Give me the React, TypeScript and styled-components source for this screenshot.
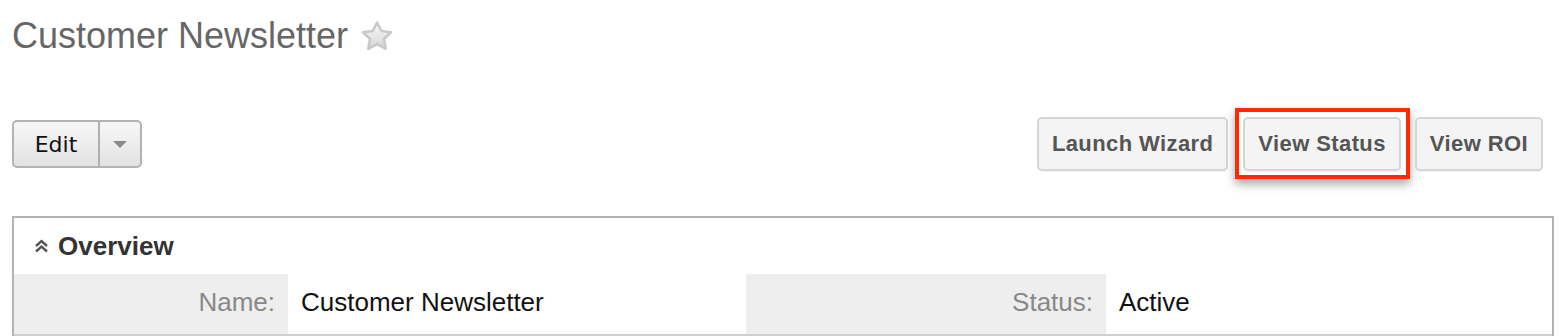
import styled, { createGlobalStyle } from "styled-components";

const GlobalStyle = createGlobalStyle`
  html, body {
    margin: 0;
    padding: 0;
    background: #fff;
  }
  body {
    font-family: "Liberation Sans", Arial, sans-serif;
  }
`;

const Page = styled.div`
  padding: 12px 6px 0 12px;
  width: 1560px;
  box-sizing: border-box;
`;

const TitleRow = styled.div`
  display: flex;
  align-items: center;
  gap: 12px;
  height: 48px;
`;

const Title = styled.h1`
  margin: 0;
  font-size: 36px;
  font-weight: normal;
  color: #666;
  line-height: 48px;
`;

const Toolbar = styled.div`
  display: flex;
  justify-content: space-between;
  align-items: center;
  margin-top: 57px;
  padding-right: 11px;
  height: 54px;
`;

const SplitButton = styled.div`
  display: flex;
  height: 48px;
  box-sizing: border-box;
  border: 2px solid #b3b3b3;
  border-radius: 5px;
  background: linear-gradient(#f7f7f7, #e2e2e2);
  overflow: hidden;
`;

const SplitMain = styled.button`
  width: 86px;
  border: none;
  border-right: 2px solid #b0b0b0;
  background: transparent;
  font-family: "DejaVu Sans", sans-serif;
  font-size: 22px;
  color: #111;
  padding: 0;
`;

const SplitCaret = styled.button`
  width: 40px;
  border: none;
  background: transparent;
  display: flex;
  align-items: center;
  justify-content: center;
  padding: 0;

  &::after {
    content: "";
    border-left: 7px solid transparent;
    border-right: 7px solid transparent;
    border-top: 7px solid #8a8a8a;
  }
`;

const Actions = styled.div`
  display: flex;
  gap: 15px;
  align-items: center;
`;

const ActionButton = styled.button`
  height: 54px;
  box-sizing: border-box;
  padding: 0 13px;
  border: 2px solid #d6d6d6;
  border-radius: 5px;
  background: #f4f4f4;
  box-shadow: 0 1px 1px rgba(0, 0, 0, 0.06);
  font-family: "Liberation Sans", Arial, sans-serif;
  font-weight: bold;
  font-size: 22px;
  letter-spacing: 0.4px;
  color: #555;
`;

const Highlight = styled.div`
  margin: -10px -10px -9px -8px;
  padding: 5px 5px 4px 4px;
  border: 4px solid #ff2a00;
  box-shadow: 0 5px 9px rgba(0, 0, 0, 0.35);
  display: flex;
`;

const Panel = styled.section`
  margin-top: 45px;
  border: 2px solid #b3b3b3;
  border-bottom: none;
`;

const PanelHeader = styled.div`
  height: 56px;
  display: flex;
  align-items: center;
  gap: 9px;
  padding-left: 20px;
  font-size: 26px;
  font-weight: bold;
  color: #333;
`;

const FieldRow = styled.div`
  display: grid;
  grid-template-columns: 274px 458px 360px 1fr;
  height: 60px;
  border-bottom: 2px solid #cfcfcf;
  font-size: 26px;
`;

const Label = styled.div`
  background: #eee;
  color: #888;
  display: flex;
  align-items: center;
  justify-content: flex-end;
  padding: 0 13px 3px 0;
`;

const Value = styled.div`
  color: #111;
  display: flex;
  align-items: center;
  padding: 0 0 3px 13px;
`;

const Star = () => (
  <svg width="34" height="32" viewBox="0 0 34 32">
    <defs>
      <linearGradient id="starFill" x1="0" y1="0" x2="0" y2="1">
        <stop offset="0" stopColor="#fbfbfb" />
        <stop offset="1" stopColor="#d4d4d4" />
      </linearGradient>
    </defs>
    <path
      d="M17 2.5 L21.3 11 L31 12.3 L24 19 L25.7 28.8 L17 24.2 L8.3 28.8 L10 19 L3 12.3 L12.7 11 Z"
      fill="url(#starFill)"
      stroke="#c9c9c9"
      strokeWidth="2.6"
      strokeLinejoin="round"
    />
  </svg>
);

const CollapseIcon = () => (
  <svg width="15" height="14" viewBox="0 0 15 14">
    <path
      d="M2 7 L7.5 2 L13 7 M2 12.5 L7.5 7.5 L13 12.5"
      fill="none"
      stroke="#555"
      strokeWidth="2.4"
    />
  </svg>
);

export default function App() {
  return (
    <>
      <GlobalStyle />
      <Page>
        <TitleRow>
          <Title>Customer Newsletter</Title>
          <Star />
        </TitleRow>
        <Toolbar>
          <SplitButton>
            <SplitMain>Edit</SplitMain>
            <SplitCaret aria-label="More actions" />
          </SplitButton>
          <Actions>
            <ActionButton>Launch Wizard</ActionButton>
            <Highlight>
              <ActionButton>View Status</ActionButton>
            </Highlight>
            <ActionButton>View ROI</ActionButton>
          </Actions>
        </Toolbar>
        <Panel>
          <PanelHeader>
            <CollapseIcon />
            Overview
          </PanelHeader>
          <FieldRow>
            <Label>Name:</Label>
            <Value>Customer Newsletter</Value>
            <Label>Status:</Label>
            <Value>Active</Value>
          </FieldRow>
        </Panel>
      </Page>
    </>
  );
}
